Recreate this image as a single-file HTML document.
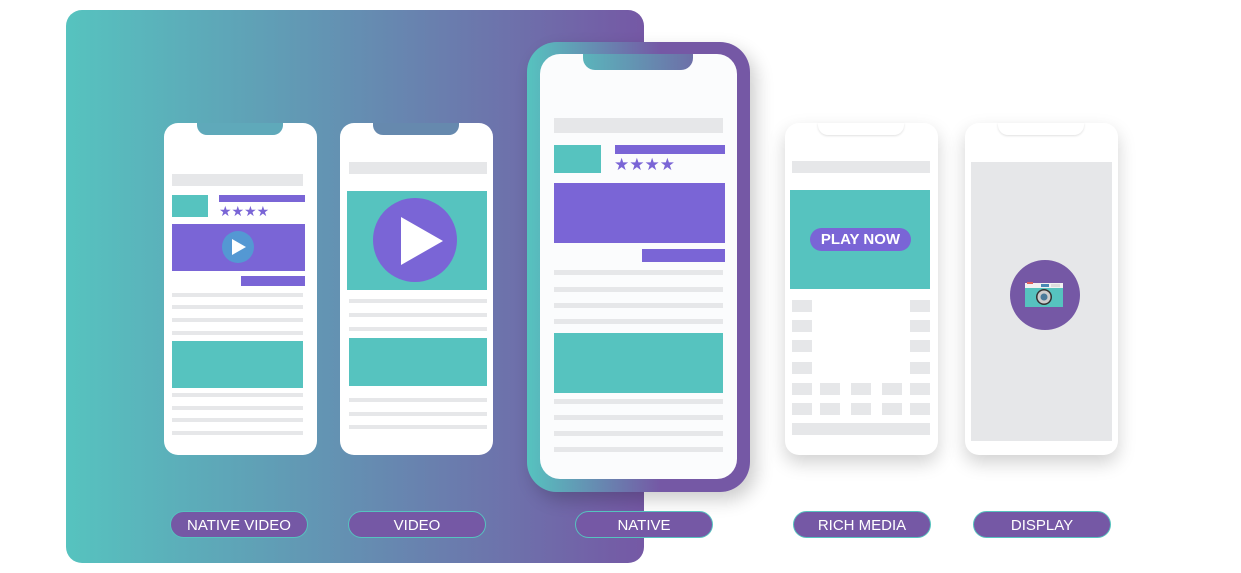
<!DOCTYPE html>
<html><head><meta charset="utf-8"><style>
*{margin:0;padding:0;box-sizing:border-box}
body{width:1241px;height:573px;background:#fff;position:relative;overflow:hidden;font-family:"Liberation Sans",sans-serif}
.a{position:absolute}
.bg{left:66px;top:10px;width:578px;height:553px;border-radius:16px;background:linear-gradient(90deg,#56c3bf 0%,#6394b3 45%,#7558a5 100%)}
.ph{background:#fff;border-radius:14px;width:153px;height:332px;top:123px}
.sh{box-shadow:0 8px 18px rgba(0,0,0,.18)}
.g{background:#e6e7e9}.t{background:#56c3bf}.p{background:#7a65d6}
.pill{top:511px;width:138px;height:27px;border-radius:14px;background:#7558a5;border:1px solid #56c3bf;color:#fff;font-size:15px;text-align:center;line-height:27px}
.st{color:#7a65d6;font-size:14px;letter-spacing:0px}
.wn{width:86px;height:12px;border-radius:0 0 10px 10px;background:#fff;box-shadow:0 1px 2px rgba(0,0,0,.12)}
</style></head><body>
<div class="a bg"></div>

<!-- phone 1 -->
<div class="a ph" style="left:164px"></div>
<div class="a" style="left:197px;top:123px;width:86px;height:12px;border-radius:0 0 10px 10px;background:#5fa9ba"></div>
<div class="a g" style="left:172px;top:174px;width:131px;height:12px"></div>
<div class="a t" style="left:172px;top:195px;width:36px;height:22px"></div>
<div class="a p" style="left:219px;top:195px;width:86px;height:7px"></div>
<div class="a st" style="left:219px;top:203px">★★★★</div>
<div class="a p" style="left:172px;top:224px;width:133px;height:47px"></div>
<div class="a" style="left:222px;top:231px;width:32px;height:32px;border-radius:50%;background:#5498d3"></div>
<svg class="a" style="left:231px;top:238px" width="16" height="18"><path d="M1 1L15 9L1 17Z" fill="#fff"/></svg>
<div class="a p" style="left:241px;top:276px;width:64px;height:10px"></div>
<div class="a g" style="left:172px;top:293px;width:131px;height:4px"></div>
<div class="a g" style="left:172px;top:305px;width:131px;height:4px"></div>
<div class="a g" style="left:172px;top:318px;width:131px;height:4px"></div>
<div class="a g" style="left:172px;top:331px;width:131px;height:4px"></div>
<div class="a t" style="left:172px;top:341px;width:131px;height:47px"></div>
<div class="a g" style="left:172px;top:393px;width:131px;height:4px"></div>
<div class="a g" style="left:172px;top:406px;width:131px;height:4px"></div>
<div class="a g" style="left:172px;top:418px;width:131px;height:4px"></div>
<div class="a g" style="left:172px;top:431px;width:131px;height:4px"></div>

<!-- phone 2 -->
<div class="a ph" style="left:340px"></div>
<div class="a" style="left:373px;top:123px;width:86px;height:12px;border-radius:0 0 10px 10px;background:#6689ae"></div>
<div class="a g" style="left:349px;top:162px;width:138px;height:12px"></div>
<div class="a t" style="left:347px;top:191px;width:140px;height:99px"></div>
<div class="a" style="left:373px;top:198px;width:84px;height:84px;border-radius:50%;background:#7a65d6"></div>
<svg class="a" style="left:400px;top:216px" width="44" height="50"><path d="M1 1L43 25L1 49Z" fill="#fff"/></svg>
<div class="a g" style="left:349px;top:299px;width:138px;height:4px"></div>
<div class="a g" style="left:349px;top:313px;width:138px;height:4px"></div>
<div class="a g" style="left:349px;top:327px;width:138px;height:4px"></div>
<div class="a t" style="left:349px;top:338px;width:138px;height:48px"></div>
<div class="a g" style="left:349px;top:398px;width:138px;height:4px"></div>
<div class="a g" style="left:349px;top:412px;width:138px;height:4px"></div>
<div class="a g" style="left:349px;top:425px;width:138px;height:4px"></div>

<!-- native -->
<div class="a" style="left:527px;top:42px;width:223px;height:450px;border-radius:30px;background:linear-gradient(90deg,#56c3bf,#7558a5 60%);box-shadow:6px 8px 18px rgba(0,0,0,.2)"></div>
<div class="a" style="left:540px;top:54px;width:197px;height:425px;border-radius:20px;background:#fbfcfd"></div>
<div class="a" style="left:583px;top:54px;width:110px;height:16px;border-radius:0 0 12px 12px;background:linear-gradient(90deg,#5bb4bb,#6d6fa8)"></div>
<div class="a g" style="left:554px;top:118px;width:169px;height:15px"></div>
<div class="a t" style="left:554px;top:145px;width:47px;height:28px"></div>
<div class="a p" style="left:615px;top:145px;width:110px;height:9px"></div>
<div class="a st" style="left:614px;top:155px;font-size:17px">★★★★</div>
<div class="a p" style="left:554px;top:183px;width:171px;height:60px"></div>
<div class="a p" style="left:642px;top:249px;width:83px;height:13px"></div>
<div class="a g" style="left:554px;top:270px;width:169px;height:5px"></div>
<div class="a g" style="left:554px;top:287px;width:169px;height:5px"></div>
<div class="a g" style="left:554px;top:303px;width:169px;height:5px"></div>
<div class="a g" style="left:554px;top:319px;width:169px;height:5px"></div>
<div class="a t" style="left:554px;top:333px;width:169px;height:60px"></div>
<div class="a g" style="left:554px;top:399px;width:169px;height:5px"></div>
<div class="a g" style="left:554px;top:415px;width:169px;height:5px"></div>
<div class="a g" style="left:554px;top:431px;width:169px;height:5px"></div>
<div class="a g" style="left:554px;top:447px;width:169px;height:5px"></div>

<!-- rich media -->
<div class="a ph sh" style="left:785px"></div>
<div class="a wn" style="left:818px;top:123px"></div>
<div class="a g" style="left:792px;top:161px;width:138px;height:12px"></div>
<div class="a t" style="left:790px;top:190px;width:140px;height:99px"></div>
<div class="a" style="left:810px;top:228px;width:101px;height:23px;border-radius:12px;background:#7a65d6;color:#fff;font-weight:bold;font-size:15px;text-align:center;line-height:23px">PLAY NOW</div>
<div class="a g" style="left:792px;top:300px;width:20px;height:12px"></div><div class="a g" style="left:910px;top:300px;width:20px;height:12px"></div>
<div class="a g" style="left:792px;top:320px;width:20px;height:12px"></div><div class="a g" style="left:910px;top:320px;width:20px;height:12px"></div>
<div class="a g" style="left:792px;top:340px;width:20px;height:12px"></div><div class="a g" style="left:910px;top:340px;width:20px;height:12px"></div>
<div class="a g" style="left:792px;top:362px;width:20px;height:12px"></div><div class="a g" style="left:910px;top:362px;width:20px;height:12px"></div>
<div class="a g" style="left:792px;top:383px;width:20px;height:12px"></div><div class="a g" style="left:820px;top:383px;width:20px;height:12px"></div><div class="a g" style="left:851px;top:383px;width:20px;height:12px"></div><div class="a g" style="left:882px;top:383px;width:20px;height:12px"></div><div class="a g" style="left:910px;top:383px;width:20px;height:12px"></div>
<div class="a g" style="left:792px;top:403px;width:20px;height:12px"></div><div class="a g" style="left:820px;top:403px;width:20px;height:12px"></div><div class="a g" style="left:851px;top:403px;width:20px;height:12px"></div><div class="a g" style="left:882px;top:403px;width:20px;height:12px"></div><div class="a g" style="left:910px;top:403px;width:20px;height:12px"></div>
<div class="a g" style="left:792px;top:423px;width:138px;height:12px"></div>

<!-- display -->
<div class="a ph sh" style="left:965px"></div>
<div class="a wn" style="left:998px;top:123px"></div>
<div class="a g" style="left:971px;top:162px;width:141px;height:279px"></div>
<div class="a" style="left:1010px;top:260px;width:70px;height:70px;border-radius:50%;background:#7558a5"></div>
<svg class="a" style="left:1025px;top:282px" width="40" height="26">
<rect x="0" y="1" width="38" height="5" fill="#f2f2f2"/><rect x="0" y="6" width="38" height="19" fill="#56c3bf"/>
<rect x="2" y="0" width="6" height="2" fill="#e0615a"/><rect x="16" y="2" width="8" height="3" fill="#4a8ab5"/><rect x="26" y="2" width="9" height="3" fill="#ddd"/>
<circle cx="19" cy="15" r="8" fill="#333"/><circle cx="19" cy="15" r="6.5" fill="#ccc"/><circle cx="19" cy="15" r="3.5" fill="#4a7a9a"/></svg>

<div class="a pill" style="left:170px">NATIVE VIDEO</div>
<div class="a pill" style="left:348px">VIDEO</div>
<div class="a pill" style="left:575px">NATIVE</div>
<div class="a pill" style="left:793px">RICH MEDIA</div>
<div class="a pill" style="left:973px">DISPLAY</div>
</body></html>
